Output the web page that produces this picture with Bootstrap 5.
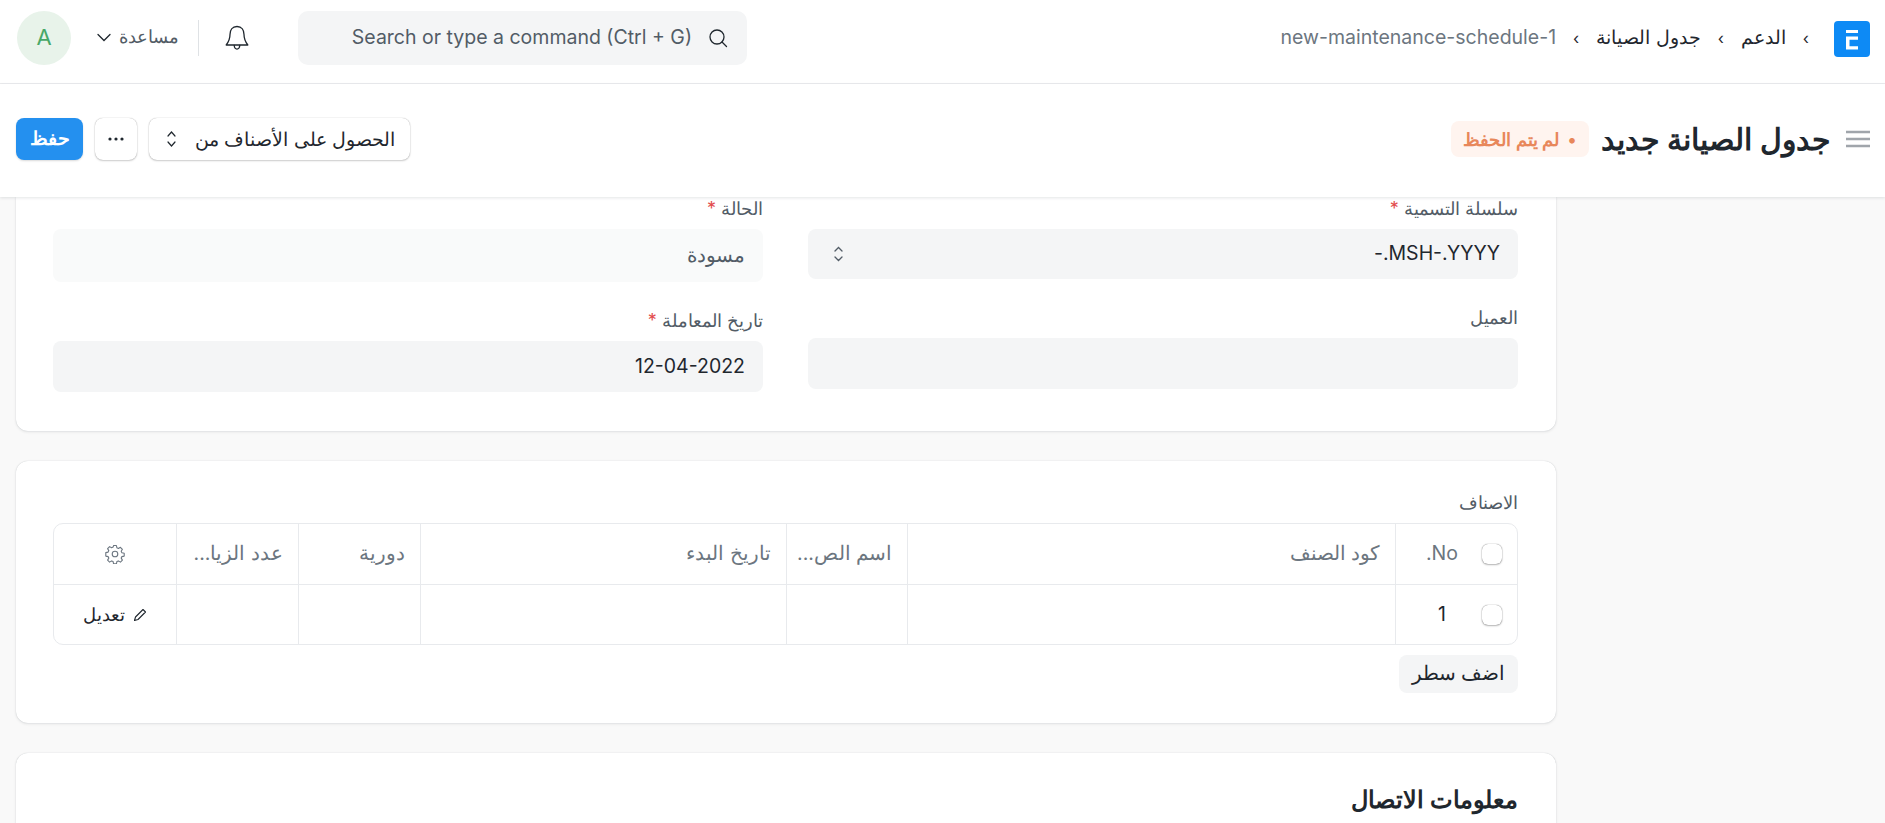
<!DOCTYPE html>
<html lang="ar" dir="rtl">
<head>
<meta charset="utf-8">
<title>جدول الصيانة جديد</title>
<link href="https://cdn.jsdelivr.net/npm/bootstrap@5.3.0/dist/css/bootstrap.min.css" rel="stylesheet">
<style>
html,body{height:823px;overflow:hidden}
body{background:#f9f9f9;font-family:Inter,"Noto Sans",sans-serif;color:#1f272e;font-size:19.5px}
.top-bar{height:84px;background:#fff;border-bottom:1px solid #ebecee;padding:0 15px 8px 17px}
.logo-box{width:36px;height:36px;background:#0d8af5;border-radius:4px;margin-top:2px}
.crumb{color:#1f272e;font-size:19.3px;margin-right:8px}
.crumb-cur{color:#6c7680;font-size:19.5px}
.crumb-sep{color:#1f272e;font-size:16px;margin:0 17px}
.search-box{width:449px;height:54px;background:#f4f5f6;border-radius:10px;color:#525c66;font-size:19.5px;padding:0 19px}
.bell-ico{margin:0 49px 0 26px}
.help-txt{color:#525c66;font-size:17.5px;margin:0 19px 0 26px}
.v-line{width:1px;height:36px;background:#dfe2e5}
.user-dot{width:54px;height:54px;border-radius:50%;background:#e8f3ea;color:#48a868;font-size:22px}
.page-bar{height:113px;background:#fff;box-shadow:0 1px 3px rgba(25,39,52,.12);position:relative;z-index:2;padding:0 15px 3px 16px}
.page-title{font-size:30px;font-weight:600;color:#1f272e;margin:0 15px 0 12px;line-height:1.2}
.unsaved{height:36px;width:138px;background:#fff4ef;color:#e8875a;font-size:18px;font-weight:600;border-radius:8px}
.tool-btn{height:42px;background:#fff;border:0;border-radius:8px;box-shadow:0 0 1px rgba(0,0,0,.35),0 1px 2px rgba(0,0,0,.18);color:#1f272e;font-size:19.3px}
.pick-btn{width:261px;padding:0 15px 0 18px}
.more-btn{width:42px;padding:0}
.tools-gap{gap:12px}
.save-btn{height:42px;width:67px;background:#2490ef;color:#fff;border:0;border-radius:8px;font-size:19px;font-weight:600;box-shadow:0 1px 2px rgba(0,0,0,.15)}
.form-area{padding:0 329px 0 16px}
.sheet{background:#fff;border-radius:12px;box-shadow:0 0 1px rgba(25,39,52,.22),0 1px 3px rgba(25,39,52,.1);padding-left:37px;padding-right:38px}
.sheet-a{border-top-left-radius:0;border-top-right-radius:0;height:234px;margin-bottom:30px}
.sheet-b{height:262px;margin-bottom:30px;padding-top:30px}
.sheet-c{height:70px;padding-top:28px;border-bottom-left-radius:0;border-bottom-right-radius:0}
.field-row{--bs-gutter-x:45px}
.lbl{font-size:18px;color:#525c66;line-height:20px;height:20px;margin-top:2px}
.lbl-first{margin-top:2px}
.lbl-next{margin-top:29px}
.req{color:#e24c4c}
.inp{background:#f4f5f6;border-radius:8px;padding:0 18px;font-size:19.5px;color:#1f272e}
.inp-select{padding-left:26px}
.inp-ro{background:#f9fafa;color:#525c66}
.h50{height:50px;margin-top:10px}
.h53{height:53px;margin-top:10px}
.h51{height:51px;margin-top:10px}
.grid-wrap{border:1px solid #e8eaed;border-radius:10px;overflow:hidden;margin-top:10px;font-size:19.5px}
.grid-head{height:61px;border-bottom:1px solid #e8eaed;color:#6c7680}
.grid-body{height:59px;color:#1f272e}
.cell{border-left:1px solid #e8eaed;padding:0 15px;white-space:nowrap;overflow:hidden;height:100%}
.cell:last-child{border-left:0}
.gap-no{gap:24px}
.gap-one{gap:36px}
.edit-txt{font-size:18px}
.tick{width:20px;height:20px;flex:none;border-radius:6px;background:#fff;box-shadow:0 0 1px rgba(0,0,0,.6),0 1px 2px rgba(0,0,0,.25)}
.add-row{height:38px;width:119px;background:#f4f5f6;border:0;border-radius:8px;color:#1f272e;font-size:19.5px;margin-top:10px}
.sec-title{font-size:24px;font-weight:600;color:#1f272e;margin:0;line-height:38px}
</style>
</head>
<body>
<header class="top-bar d-flex align-items-center justify-content-between">
  <div class="d-flex align-items-center">
    <svg class="logo-box" viewBox="0 0 36 36"><path d="M12 9h12v3H12zM12 15.500h12v3.300h-8.500v6.400H24v3.300H12z" fill="#fff"/></svg>
    <nav class="d-flex align-items-center crumb">
      <span class="crumb-sep">›</span><span>الدعم</span>
      <span class="crumb-sep">›</span><span>جدول الصيانة</span>
      <span class="crumb-sep">›</span><span class="crumb-cur" dir="ltr">new-maintenance-schedule-1</span>
    </nav>
  </div>
  <div class="d-flex align-items-center">
    <div class="search-box d-flex align-items-center gap-3" dir="ltr">
      <span class="ms-auto">Search or type a command (Ctrl + G)</span>
      <svg width="20" height="20" viewBox="0 0 20 20" fill="none" stroke="#1f272e" stroke-width="1.3" stroke-linecap="round"><circle cx="9" cy="9" r="7"/><path d="M14 14l4.5 4.5"/></svg>
    </div>
    <svg class="bell-ico" width="24" height="26" viewBox="0 0 24 26" fill="none" stroke="#1f272e" stroke-width="1.3" stroke-linejoin="round" stroke-linecap="round"><path d="M12 1.500c-4.800 0-7 3.800-7 8 0 5-1.500 7.500-3.800 10.500h21.600c-2.300-3-3.800-5.500-3.800-10.500 0-4.200-2.200-8-7-8z"/><path d="M9.200 20.500c.4 4.700 5.200 4.700 5.600 0"/></svg>
    <div class="v-line"></div>
    <div class="d-flex align-items-center gap-2 help-txt">
      <span>مساعدة</span>
      <svg width="14" height="9" viewBox="0 0 14 9" fill="none" stroke="#1f272e" stroke-width="1.3" stroke-linecap="round"><path d="M1 1.500l6 6 6-6"/></svg>
    </div>
    <div class="user-dot d-flex align-items-center justify-content-center">A</div>
  </div>
</header>

<section class="page-bar d-flex align-items-center justify-content-between">
  <div class="d-flex align-items-center">
    <svg width="24" height="18" viewBox="0 0 24 18" stroke="#a0a5ab" stroke-width="2.500"><path d="M0 2h24M0 9h24M0 16h24"/></svg>
    <h1 class="page-title">جدول الصيانة جديد</h1>
    <span class="unsaved d-flex align-items-center justify-content-center gap-2"><span>•</span><span>لم يتم الحفظ</span></span>
  </div>
  <div class="d-flex align-items-center tools-gap">
    <button class="tool-btn pick-btn d-flex align-items-center justify-content-between">
      <span>الحصول على الأصناف من</span>
      <svg width="9" height="18" viewBox="0 0 9 18" fill="none" stroke="#1f272e" stroke-width="1.2" stroke-linecap="round"><path d="M1 6l3.500-4 3.500 4M1 12l3.500 4 3.500-4"/></svg>
    </button>
    <button class="tool-btn more-btn d-flex align-items-center justify-content-center">
      <svg width="16" height="4" viewBox="0 0 16 4" fill="#1f272e"><circle cx="2" cy="2" r="1.600"/><circle cx="8" cy="2" r="1.600"/><circle cx="14" cy="2" r="1.600"/></svg>
    </button>
    <button class="save-btn">حفظ</button>
  </div>
</section>

<main class="form-area">
  <div class="sheet sheet-a">
    <div class="row field-row">
      <div class="col-6">
        <div class="lbl lbl-first">سلسلة التسمية <span class="req">*</span></div>
        <div class="inp inp-select h50 d-flex align-items-center justify-content-between">
          <span>MSH-.YYYY.-</span>
          <svg width="9" height="16" viewBox="0 0 9 16" fill="none" stroke="#525c66" stroke-width="1.300" stroke-linecap="round"><path d="M1 5l3.500-3.500 3.500 3.500M1 11l3.500 3.500 3.500-3.500"/></svg>
        </div>
        <div class="lbl lbl-next">العميل</div>
        <div class="inp h51"></div>
      </div>
      <div class="col-6">
        <div class="lbl lbl-first">الحالة <span class="req">*</span></div>
        <div class="inp inp-ro h53 d-flex align-items-center">مسودة</div>
        <div class="lbl lbl-next">تاريخ المعاملة <span class="req">*</span></div>
        <div class="inp h51 d-flex align-items-center"><span dir="ltr">12-04-2022</span></div>
      </div>
    </div>
  </div>

  <div class="sheet sheet-b">
    <div class="lbl">الاصناف</div>
    <div class="grid-wrap">
      <div class="row g-0 grid-head align-items-center">
        <div class="col-1 cell d-flex align-items-center gap-no"><span class="tick"></span><span>No.</span></div>
        <div class="col-4 cell d-flex align-items-center">كود الصنف</div>
        <div class="col-1 cell d-flex align-items-center">اسم الص...</div>
        <div class="col-3 cell d-flex align-items-center">تاريخ البدء</div>
        <div class="col-1 cell d-flex align-items-center">دورية</div>
        <div class="col-1 cell d-flex align-items-center">عدد الزيا...</div>
        <div class="col-1 cell d-flex align-items-center justify-content-center">
          <svg width="20" height="20" viewBox="0 0 20 20" fill="none" stroke="#6c7680" stroke-width="1.100" stroke-linejoin="round"><circle cx="10" cy="10" r="2.800"/><path d="M8.600 1.500h2.800l.5 2.300 1.500.7 2-1.200 2 2-1.200 2 .7 1.500 2.300.5v2.800l-2.300.5-.7 1.500 1.200 2-2 2-2-1.200-1.500.7-.5 2.300H8.600l-.5-2.300-1.500-.7-2 1.200-2-2 1.200-2-.7-1.500-2.300-.5V8.600l2.300-.5.7-1.500-1.200-2 2-2 2 1.200 1.500-.7z"/></svg>
        </div>
      </div>
      <div class="row g-0 grid-body align-items-center">
        <div class="col-1 cell d-flex align-items-center gap-one"><span class="tick"></span><span>1</span></div>
        <div class="col-4 cell"></div>
        <div class="col-1 cell"></div>
        <div class="col-3 cell"></div>
        <div class="col-1 cell"></div>
        <div class="col-1 cell"></div>
        <div class="col-1 cell d-flex align-items-center justify-content-center gap-2">
          <svg width="14" height="14" viewBox="0 0 14 14" fill="none" stroke="#1f272e" stroke-width="1.100" stroke-linejoin="round"><path d="M10 1.500l2.500 2.500-7.500 7.500-3.500 1 1-3.500z"/></svg>
          <span class="edit-txt">تعديل</span>
        </div>
      </div>
    </div>
    <button class="add-row">اضف سطر</button>
  </div>

  <div class="sheet sheet-c">
    <h2 class="sec-title">معلومات الاتصال</h2>
  </div>
</main>
<script src="https://cdn.jsdelivr.net/npm/bootstrap@5.3.0/dist/js/bootstrap.bundle.min.js"></script>
</body>
</html>
